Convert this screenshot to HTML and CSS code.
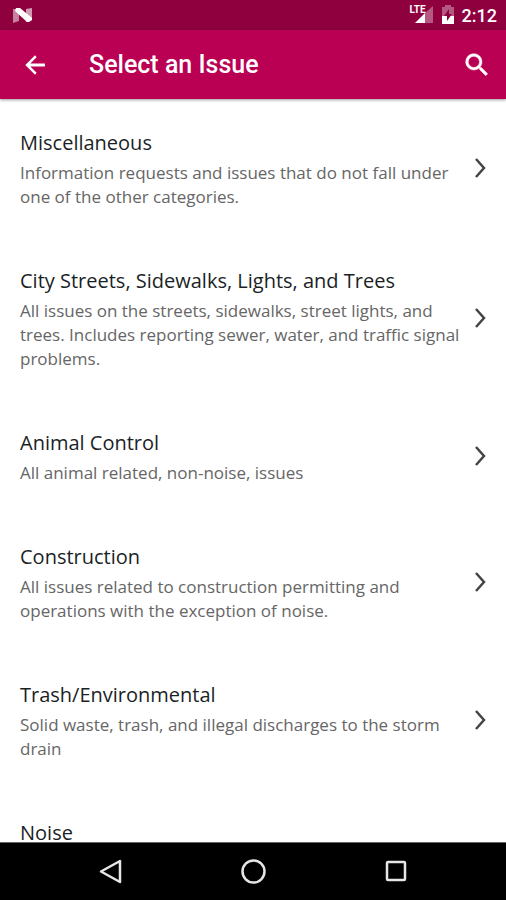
FILE: index.html
```html
<!DOCTYPE html>
<html lang="en">
<head>
    <meta charset="UTF-8">
    <meta name="viewport" content="width=device-width, initial-scale=1.0">
    <title>Select an Issue</title>
    <link rel="stylesheet" href="styles.css">
</head>
<body>
    <!-- Status bar -->
    <div class="status-bar">
        <svg class="logo" width="20" height="16" viewBox="0 0 20 16" aria-hidden="true">
            <path d="M0 2h6v12l-6 2z" fill="#fff" opacity="0.5"/>
            <path d="M13 2l6-1v12l-6 2z" fill="#fff" opacity="0.6"/>
            <path d="M3 1h4l12 10v2l-3 2h-2L2 4z" fill="#fff"/>
        </svg>
        <div class="status-icons">
            <div class="signal">
                <svg width="24" height="20" viewBox="0 0 24 20" aria-hidden="true">
                    <path d="M15 8l8-7v17h-8z" fill="#fff" opacity="0.35"/>
                    <path d="M5 18L15 8v10z" fill="#fff"/>
                </svg>
                <span class="network">LTE</span>
            </div>
            <svg width="12" height="20" viewBox="0 0 12 20" aria-hidden="true">
                <path d="M0 2h3V0h6v2h3v10H0z" fill="#fff" opacity="0.35"/>
                <path d="M0 11h12v8H0z" fill="#fff"/>
                <path d="M7 4L2 11h3v5l5-7H7z" fill="#8f003f"/>
            </svg>
            <span class="clock">2:12</span>
        </div>
    </div>

    <!-- Toolbar -->
    <header class="toolbar">
        <button class="icon-button" type="button" aria-label="Back">
            <svg width="28" height="28" viewBox="0 0 24 24">
                <path d="M20.500 10.800H8l5.400-5.400L12 3.700 3.700 12l8.300 8.300 1.400-1.700L8 13.200h12.500z" fill="#fff"/>
            </svg>
        </button>
        <h1>Select an Issue</h1>
        <button class="icon-button" type="button" aria-label="Search">
            <svg width="30" height="30" viewBox="0 0 24 24">
                <path d="M15.5 14h-.8l-.3-.3A6.5 6.5 0 1 0 13.700 14.400l.3.3v.8l5 5 1.500-1.500zM9.500 14a4.500 4.500 0 1 1 0-9 4.500 4.500 0 0 1 0 9z" fill="#fff" stroke="#fff" stroke-width="0.4"/>
            </svg>
        </button>
    </header>

    <!-- Issue categories -->
    <main class="issue-list">
        <a class="issue" href="#miscellaneous">
            <div class="issue-text">
                <h2>Miscellaneous</h2>
                <p>Information requests and issues that do not fall under one of the other categories.</p>
            </div>
            <svg class="chevron" width="12" height="20" viewBox="0 0 12 20"><path d="M2 1l8 9-8 9"/></svg>
        </a>
        <a class="issue" href="#streets">
            <div class="issue-text">
                <h2>City Streets, Sidewalks, Lights, and Trees</h2>
                <p>All issues on the streets, sidewalks, street lights, and trees. Includes reporting sewer, water, and traffic signal problems.</p>
            </div>
            <svg class="chevron" width="12" height="20" viewBox="0 0 12 20"><path d="M2 1l8 9-8 9"/></svg>
        </a>
        <a class="issue" href="#animal-control">
            <div class="issue-text">
                <h2>Animal Control</h2>
                <p>All animal related, non-noise, issues</p>
            </div>
            <svg class="chevron" width="12" height="20" viewBox="0 0 12 20"><path d="M2 1l8 9-8 9"/></svg>
        </a>
        <a class="issue" href="#construction">
            <div class="issue-text">
                <h2>Construction</h2>
                <p>All issues related to construction permitting and operations with the exception of noise.</p>
            </div>
            <svg class="chevron" width="12" height="20" viewBox="0 0 12 20"><path d="M2 1l8 9-8 9"/></svg>
        </a>
        <a class="issue" href="#trash">
            <div class="issue-text">
                <h2>Trash/Environmental</h2>
                <p>Solid waste, trash, and illegal discharges to the storm drain</p>
            </div>
            <svg class="chevron" width="12" height="20" viewBox="0 0 12 20"><path d="M2 1l8 9-8 9"/></svg>
        </a>
        <a class="issue" href="#noise">
            <div class="issue-text">
                <h2>Noise</h2>
            </div>
        </a>
    </main>

    <!-- System navigation -->
    <nav class="nav-bar">
        <button class="icon-button" type="button" aria-label="System back">
            <svg width="24" height="26" viewBox="0 0 24 26"><path d="M22 2v21L3 12.500z"/></svg>
        </button>
        <button class="icon-button" type="button" aria-label="Home">
            <svg width="26" height="26" viewBox="0 0 26 26"><circle cx="13.500" cy="12.500" r="11"/></svg>
        </button>
        <button class="icon-button" type="button" aria-label="Recent apps">
            <svg width="24" height="26" viewBox="0 0 24 26"><rect x="3" y="3" width="18" height="18" rx="1"/></svg>
        </button>
    </nav>
</body>
</html>
```

FILE: styles.css
```css
* {
    box-sizing: border-box;
}

body {
    font-family: "Open Sans", "Noto Sans", sans-serif;
    background-color: #fff;
    margin: 0;
    display: flex;
    flex-direction: column;
    height: 100vh;
}

h1, h2, p {
    margin: 0;
}

svg {
    display: block;
    flex-shrink: 0;
}

.status-bar {
    display: flex;
    justify-content: space-between;
    align-items: center;
    height: 30px;
    flex-shrink: 0;
    padding: 0 9px 0 13px;
    background-color: #8f003f;
    color: #fff;
    font-family: Roboto, sans-serif;
}

.status-icons {
    display: flex;
    align-items: center;
    gap: 8px;
}

.signal {
    position: relative;
}

.network {
    position: absolute;
    top: 0;
    left: 0;
    font-family: Roboto, sans-serif;
    font-size: 10px;
    line-height: 10px;
    font-weight: bold;
}

.clock {
    font-size: 18px;
    font-weight: 500;
}

.toolbar {
    display: flex;
    align-items: center;
    height: 69px;
    flex-shrink: 0;
    padding: 0 14px 0 21px;
    background-color: #b90053;
    color: #fff;
    box-shadow: 0 1px 3px rgba(0, 0, 0, 0.4);
    z-index: 1;
}

.toolbar h1 {
    flex: 1;
    margin-left: 40px;
    font-family: Roboto, sans-serif;
    font-size: 25px;
    font-weight: 500;
}

.icon-button {
    padding: 0;
    border: none;
    background: none;
    cursor: pointer;
}

.issue-list {
    flex: 1;
    min-height: 0;
    overflow-y: auto;
    scrollbar-width: none;
}

.issue {
    display: flex;
    align-items: center;
    padding: 28px 20px;
    color: #1b1f26;
    text-decoration: none;
}

.issue-text {
    flex: 1;
}

.issue h2 {
    font-size: 20px;
    line-height: 32px;
    font-weight: normal;
}

.issue p {
    margin-top: 2px;
    color: #666;
    font-size: 17px;
    line-height: 24px;
}

.chevron {
    fill: none;
    stroke: #444;
    stroke-width: 2.5;
}

.nav-bar {
    display: flex;
    justify-content: center;
    align-items: center;
    gap: 118px;
    height: 58px;
    flex-shrink: 0;
    border-top: 1px solid #666;
    background-color: #000;
}

.nav-bar svg {
    fill: none;
    stroke: #e6e6e6;
    stroke-width: 2.5;
    stroke-linejoin: round;
}
```
